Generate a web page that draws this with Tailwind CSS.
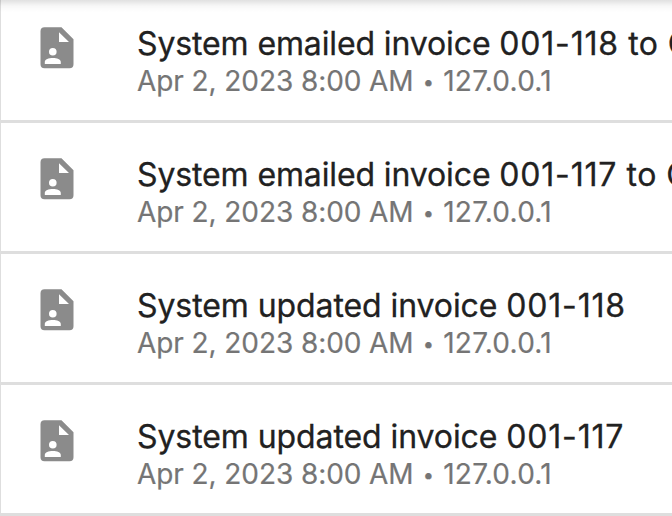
<!DOCTYPE html>
<html lang="en">
<head>
    <meta charset="UTF-8">
    <meta name="viewport" content="width=device-width, initial-scale=1.0">
    <title>Activity</title>
    <script src="https://cdn.jsdelivr.net/npm/@tailwindcss/browser@4"></script>
</head>
<body class="bg-white overflow-hidden relative font-['Inter',sans-serif]">
    <!-- Shadow of the bar above the list -->
    <div class="absolute inset-x-0 top-0 h-3 bg-linear-to-b from-black/12 via-black/3 to-transparent"></div>

    <!-- Icon shared by all rows -->
    <svg class="hidden">
        <symbol id="file-account" viewBox="-0.5 -0.2 34 42">
            <path fill="currentColor" fill-rule="evenodd" d="M4 0H21L33 12V37A4 4 0 0 1 29 41H4A4 4 0 0 1 0 37V4A4 4 0 0 1 4 0ZM18.5 5V14.7H28.5ZM12.3 20.8A3.8 3.8 0 1 0 12.3 28.4A3.8 3.8 0 1 0 12.3 20.8ZM4.3 36.7H20.3V34.7C20.3 32 16.5 30.7 12.3 30.7S4.3 32 4.3 34.7Z"/>
        </symbol>
    </svg>

    <!-- Activity List -->
    <ul class="h-[516px] border-l border-[#dedede] whitespace-nowrap">
        <li class="flex h-[123px] pt-[27px] pl-[39px] border-b-3 border-[#dedede]">
            <svg class="w-[34px] h-[42px] shrink-0 text-[#8b8b8b]"><use href="#file-account"/></svg>
            <div class="ml-[63px] min-w-0 flex-1 overflow-hidden -mt-0.5">
                <p class="text-[32px] leading-[38px] tracking-[-0.12px] text-[#212121] [-webkit-text-stroke:0.3px]">System emailed invoice <span class="tracking-[0.8px]">001-118</span><span class="tracking-[0.4px]"> to </span>C</p>
                <p class="text-[28px] leading-9 tracking-[-0.08px] text-[#757575] [-webkit-text-stroke:0.2px]">Apr 2, 2023 8:00 AM <span class="inline-block w-[14px] text-[20px] text-center relative -top-[2px]">•</span> <span class="tracking-[0.25px]">127.0.0.1</span></p>
            </div>
        </li>
        <li class="flex h-[131px] pt-[35px] pl-[39px] border-b-3 border-[#dedede]">
            <svg class="w-[34px] h-[42px] shrink-0 text-[#8b8b8b]"><use href="#file-account"/></svg>
            <div class="ml-[63px] min-w-0 flex-1 overflow-hidden -mt-0.5">
                <p class="text-[32px] leading-[38px] tracking-[-0.12px] text-[#212121] [-webkit-text-stroke:0.3px]">System emailed invoice <span class="tracking-[0.8px]">001-117</span><span class="tracking-[0.4px]"> to </span>C</p>
                <p class="text-[28px] leading-9 tracking-[-0.08px] text-[#757575] [-webkit-text-stroke:0.2px]">Apr 2, 2023 8:00 AM <span class="inline-block w-[14px] text-[20px] text-center relative -top-[2px]">•</span> <span class="tracking-[0.25px]">127.0.0.1</span></p>
            </div>
        </li>
        <li class="flex h-[131px] pt-[35px] pl-[39px] border-b-3 border-[#dedede]">
            <svg class="w-[34px] h-[42px] shrink-0 text-[#8b8b8b]"><use href="#file-account"/></svg>
            <div class="ml-[63px] min-w-0 flex-1 overflow-hidden -mt-0.5">
                <p class="text-[32px] leading-[38px] tracking-[-0.08px] text-[#212121] [-webkit-text-stroke:0.3px]">System updated invoice <span class="tracking-[0.8px]">001-118</span></p>
                <p class="text-[28px] leading-9 tracking-[-0.08px] text-[#757575] [-webkit-text-stroke:0.2px]">Apr 2, 2023 8:00 AM <span class="inline-block w-[14px] text-[20px] text-center relative -top-[2px]">•</span> <span class="tracking-[0.25px]">127.0.0.1</span></p>
            </div>
        </li>
        <li class="flex h-[131px] pt-[35px] pl-[39px] border-b-3 border-[#dedede]">
            <svg class="w-[34px] h-[42px] shrink-0 text-[#8b8b8b]"><use href="#file-account"/></svg>
            <div class="ml-[63px] min-w-0 flex-1 overflow-hidden -mt-0.5">
                <p class="text-[32px] leading-[38px] tracking-[-0.08px] text-[#212121] [-webkit-text-stroke:0.3px]">System updated invoice <span class="tracking-[0.8px]">001-117</span></p>
                <p class="text-[28px] leading-9 tracking-[-0.08px] text-[#757575] [-webkit-text-stroke:0.2px]">Apr 2, 2023 8:00 AM <span class="inline-block w-[14px] text-[20px] text-center relative -top-[2px]">•</span> <span class="tracking-[0.25px]">127.0.0.1</span></p>
            </div>
        </li>
    </ul>
</body>
</html>
